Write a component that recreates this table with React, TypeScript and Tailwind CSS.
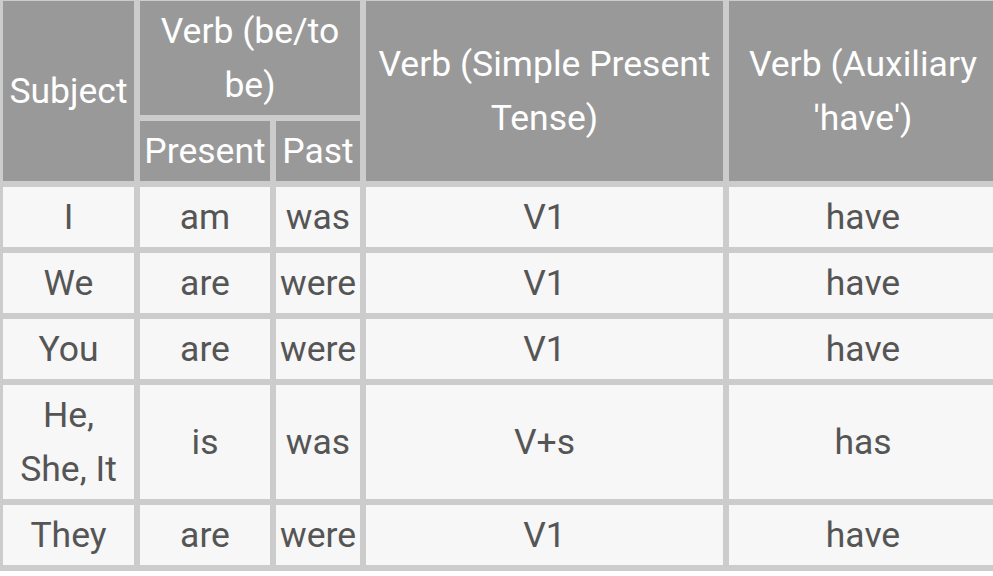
const rows: { subject: string; present: string; past: string; simple: string; aux: string }[] = [
  { subject: "I", present: "am", past: "was", simple: "V1", aux: "have" },
  { subject: "We", present: "are", past: "were", simple: "V1", aux: "have" },
  { subject: "You", present: "are", past: "were", simple: "V1", aux: "have" },
  { subject: "He, She, It", present: "is", past: "was", simple: "V+s", aux: "has" },
  { subject: "They", present: "are", past: "were", simple: "V1", aux: "have" },
];

const th = "bg-[#999999] text-white font-normal text-center align-middle px-1 py-[3px]";
const td = "bg-[#f7f7f7] text-[#555555] text-center align-middle px-1 py-[3px]";

export default function App() {
  return (
    <div className="w-full overflow-hidden bg-white">
      <table
        className="ml-[-3px] mt-[-5px] table-fixed border-separate border-spacing-[6px] bg-[#cccccc] text-[35.5px] leading-[54px] w-[1006px]"
        style={{ fontFamily: "Roboto, 'Liberation Sans', sans-serif" }}
      >
        <colgroup>
          <col className="w-[131px]" />
          <col className="w-[130px]" />
          <col className="w-[84px]" />
          <col className="w-[357px]" />
          <col className="w-[268px]" />
        </colgroup>
        <thead>
          <tr>
            <th rowSpan={2} className={th}>
              Subject
            </th>
            <th colSpan={2} className={th}>
              Verb (be/to be)
            </th>
            <th rowSpan={2} className={th}>
              Verb (Simple Present Tense)
            </th>
            <th rowSpan={2} className={th}>
              Verb (Auxiliary 'have')
            </th>
          </tr>
          <tr>
            <th className={`${th} px-0`}>Present</th>
            <th className={`${th} px-0`}>Past</th>
          </tr>
        </thead>
        <tbody>
          {rows.map((r) => (
            <tr key={r.subject}>
              <td className={td}>{r.subject}</td>
              <td className={td}>{r.present}</td>
              <td className={`${td} px-0`}>{r.past}</td>
              <td className={td}>{r.simple}</td>
              <td className={td}>{r.aux}</td>
            </tr>
          ))}
        </tbody>
      </table>
    </div>
  );
}
